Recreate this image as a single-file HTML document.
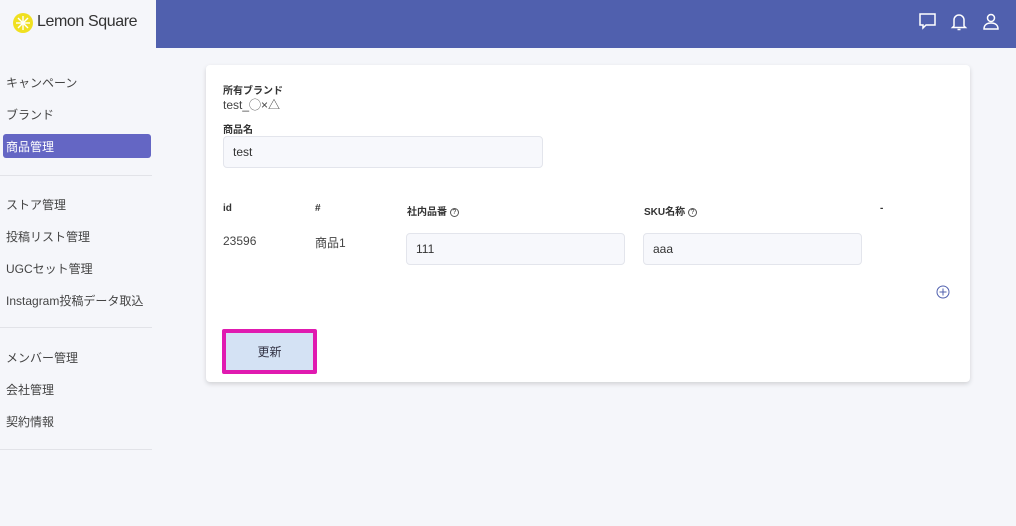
<!DOCTYPE html>
<html><head><meta charset="utf-8"><style>
*{margin:0;padding:0;box-sizing:border-box}
body{width:1016px;height:526px;background:#f5f6fa;font-family:"Liberation Sans","Noto Sans CJK JP",sans-serif;color:#333;position:relative;overflow:hidden;font-size:12px}
.abs{position:absolute}
.hdr{left:156px;top:0;width:860px;height:48px;background:#5060ae}
.nav{left:6px;font-size:12px;color:#444}
.act{left:3px;top:134px;width:148px;height:24px;background:#6466c4;border-radius:3px;color:#fff;padding:4px 3px}
.hr{left:0;width:152px;height:1px;background:#e2e3e8}
.card{left:206px;top:65px;width:764px;height:317px;background:#fff;border-radius:4px;box-shadow:0 2px 5px rgba(0,0,0,.15)}
.lbl{font-size:10px;font-weight:bold;color:#333}
.inp{background:#f7f8fc;border:1px solid #e3e5ec;border-radius:4px;font-size:12px;padding:0 9px;color:#333;display:flex;align-items:center}
.q{display:inline-block;width:9px;height:9px;border:1px solid #555;border-radius:50%;font-size:7px;text-align:center;line-height:8px;vertical-align:middle;font-weight:normal}
</style></head><body>
<div class="abs" style="left:13px;top:13px;width:20px;height:20px;border-radius:50%;background:#f0e020"></div>
<svg class="abs" style="left:13px;top:13px" width="20" height="20"><g stroke="#fff" stroke-width="1.4"><line x1="10" y1="3" x2="10" y2="17"/><line x1="3" y1="10" x2="17" y2="10"/><line x1="5" y1="5" x2="15" y2="15"/><line x1="15" y1="5" x2="5" y2="15"/></g></svg>
<div class="abs" style="left:37px;top:13px;font-size:16px;letter-spacing:-0.4px;color:#333">Lemon Square</div>
<div class="abs hdr"></div>
<svg class="abs" style="left:918px;top:12px" width="20" height="20" fill="none" stroke="#fff" stroke-width="1.5"><path d="M2 2h15v11H8l-3 3v-3H2z"/></svg>
<svg class="abs" style="left:950px;top:12px" width="18" height="20" fill="none" stroke="#fff" stroke-width="1.5"><path d="M4 14V8a5 5 0 0 1 10 0v6l1.5 1.5h-13z M7.5 17.5h3"/></svg>
<svg class="abs" style="left:981px;top:12px" width="20" height="20" fill="none" stroke="#fff" stroke-width="1.5"><circle cx="10" cy="6" r="3.5"/><path d="M3 17c0-4 3-6 7-6s7 2 7 6z"/></svg>
<div class="abs nav" style="top:74px">キャンペーン</div>
<div class="abs nav" style="top:106px">ブランド</div>
<div class="abs act">商品管理</div>
<div class="abs hr" style="top:175px"></div>
<div class="abs nav" style="top:196px">ストア管理</div>
<div class="abs nav" style="top:228px">投稿リスト管理</div>
<div class="abs nav" style="top:260px">UGCセット管理</div>
<div class="abs nav" style="top:292px">Instagram投稿データ取込</div>
<div class="abs hr" style="top:327px"></div>
<div class="abs nav" style="top:349px">メンバー管理</div>
<div class="abs nav" style="top:381px">会社管理</div>
<div class="abs nav" style="top:413px">契約情報</div>
<div class="abs hr" style="top:449px"></div>
<div class="abs card"></div>
<div class="abs lbl" style="left:223px;top:82px">所有ブランド</div>
<div class="abs" style="left:223px;top:96px;font-size:12px;color:#444">test_◯×△</div>
<div class="abs lbl" style="left:223px;top:121px">商品名</div>
<div class="abs inp" style="left:223px;top:136px;width:320px;height:32px">test</div>
<div class="abs lbl" style="left:223px;top:203px">id</div>
<div class="abs lbl" style="left:315px;top:203px">#</div>
<div class="abs lbl" style="left:407px;top:203px">社内品番 <span class="q">?</span></div>
<div class="abs lbl" style="left:644px;top:203px">SKU名称 <span class="q">?</span></div>
<div class="abs lbl" style="left:880px;top:203px">-</div>
<div class="abs" style="left:223px;top:234px;font-size:12px;color:#444">23596</div>
<div class="abs" style="left:315px;top:234px;font-size:12px;color:#444">商品1</div>
<div class="abs inp" style="left:406px;top:233px;width:219px;height:32px">111</div>
<div class="abs inp" style="left:643px;top:233px;width:219px;height:32px">aaa</div>
<svg class="abs" style="left:936px;top:285px" width="14" height="14" fill="none" stroke="#5060ae" stroke-width="1"><circle cx="7" cy="7" r="6"/><path d="M7 3.5v7M3.5 7h7"/></svg>
<div class="abs" style="left:222px;top:329px;width:95px;height:45px;border:4px solid #e01ab0;border-radius:2px;background:#d4e2f4;font-size:12px;color:#334;display:flex;align-items:center;justify-content:center">更新</div>
</body></html>
